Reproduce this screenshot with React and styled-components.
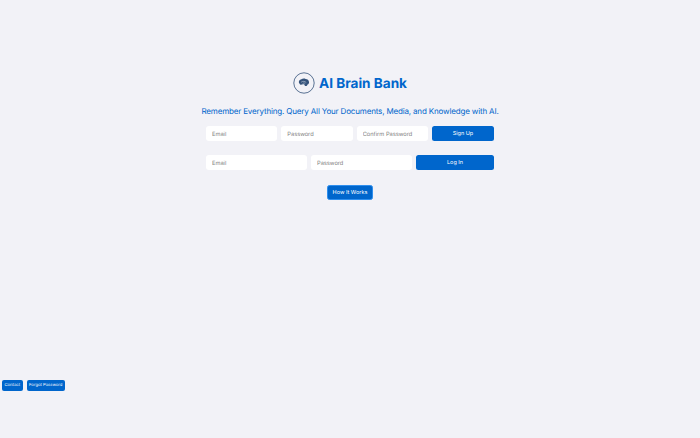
import styled, { createGlobalStyle } from "styled-components";

const GlobalStyle = createGlobalStyle`
    html, body {
        margin: 0;
        padding: 0;
        background: #f2f2f7;
    }
    * {
        box-sizing: border-box;
        text-rendering: geometricPrecision;
    }
`

const Page = styled.div`
    width: 700px;
    height: 438px;
    display: flex;
    flex-direction: column;
    align-items: center;
    font-family: Inter, "Liberation Sans", sans-serif;
    background: #f2f2f7;
    padding-top: 72px;
    overflow: hidden;
`

const Brand = styled.div`
    display: flex;
    align-items: center;
    gap: 4px;
    height: 22px;
`

const Title = styled.h1`
    margin: 0;
    padding-top: 1px;
    font-size: 13.6px;
    font-weight: 700;
    color: #0066cc;
`

const Tagline = styled.p`
    margin: 11px 0 0;
    font-size: 8px;
    line-height: 13px;
    letter-spacing: -0.16px;
    font-weight: 400;
    color: #0066cc;
`

const Form = styled.form`
    width: 288px;
    display: flex;
    gap: 4px;
    margin-top: ${(p) => p.$top}px;
`

const Input = styled.input`
    flex: 1 1 0;
    min-width: 0;
    height: 15px;
    border: none;
    border-radius: 3px;
    background: #ffffff;
    padding: 1px 6px 0;
    font-family: inherit;
    font-size: 5.7px;
    color: #333333;

    &::placeholder {
        color: #808080;
    }
`

const Button = styled.button`
    flex: ${(p) => p.$flex || "none"};
    height: 15px;
    border: none;
    border-radius: 2.5px;
    background: #0066cc;
    color: #ffffff;
    padding: 1px 6px 0;
    font-family: inherit;
    font-size: 5.5px;
    font-weight: 400;
`

const HowButton = styled(Button)`
    margin-top: 15px;
    width: 46px;
    padding: 1px 0 0;
    border: 0.5px solid #2f8fee;
`

const Footer = styled.div`
    align-self: flex-start;
    display: flex;
    gap: 4px;
    margin-top: 180px;
    margin-left: 2px;
`

const SmallButton = styled.button`
    height: 11px;
    border: none;
    border-radius: 2px;
    background: #0066cc;
    color: #ffffff;
    padding: 0 2.5px;
    font-family: inherit;
    font-size: 4.2px;
    font-weight: 400;
`

const BrainLogo = () => (
    <svg width="22" height="22" viewBox="0 0 22 22" fill="none">
        <circle cx="11" cy="11" r="10.2" stroke="#34527a" strokeWidth="0.8" />
        <path
            d="M6 11c-.6-1.8.6-3.4 2.4-3.7 1-.9 3-1 4.2-.4 1.8 0 3.3 1.3 3.4 3 .3 1.2-.4 2.2-1.5 2.5-.3 1-1 1.7-1.8 1.6-.8 0-1.3-.6-1.3-1.5-.8-.3-1.6-.2-2.3.1-1.3.4-2.5 0-2.9-1.6z"
            fill="#34527a"
        />
        <path d="M8.4 10c1.4-1 3.4-.9 4.6.3M10 11.2c.7-.4 1.5-.3 2 .2" stroke="#dfe4ec" strokeWidth="0.5" strokeLinecap="round" />
    </svg>
)

const App = () => {
    return (
        <Page>
            <GlobalStyle />
            <Brand>
                <BrainLogo />
                <Title>AI Brain Bank</Title>
            </Brand>
            <Tagline>Remember Everything. Query All Your Documents, Media, and Knowledge with AI.</Tagline>
            <Form $top={8}>
                <Input type="email" placeholder="Email" />
                <Input type="password" placeholder="Password" />
                <Input type="password" placeholder="Confirm Password" />
                <Button type="button" $flex="0 0 62px">Sign Up</Button>
            </Form>
            <Form $top={14}>
                <Input type="email" placeholder="Email" />
                <Input type="password" placeholder="Password" />
                <Button type="button" $flex="0 0 78px">Log In</Button>
            </Form>
            <HowButton type="button">How It Works</HowButton>
            <Footer>
                <SmallButton type="button">Contact</SmallButton>
                <SmallButton type="button">Forgot Password</SmallButton>
            </Footer>
        </Page>
    )
}

export default App;
